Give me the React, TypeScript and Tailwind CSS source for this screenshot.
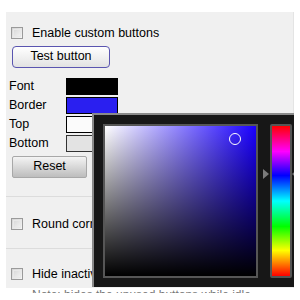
const rows = [
  { label: 'Font', swatch: 'bg-black border-black' },
  { label: 'Border', swatch: 'bg-[#2a1ff0] border-black' },
  { label: 'Top', swatch: 'bg-[#fbfbfb] border-black' },
  { label: 'Bottom', swatch: 'bg-[#e3e3e3] border-[#333]' },
];

function Checkbox() {
  return (
    <span className="inline-block h-[12px] w-[12px] shrink-0 border border-[#9a9a9a] bg-gradient-to-br from-[#d4d4d4] to-[#f6f6f6] p-[1px]">
      <span className="block h-full w-full border border-[#e8e8e8]" />
    </span>
  );
}

function ColorPicker() {
  return (
    <div className="absolute left-[92px] top-[113px] h-[174px] w-[202px] overflow-hidden">
      <div className="flex h-full w-[215px] items-start gap-[12px] border-l-[2px] border-t-[2px] border-[#8a8a8a] bg-[#171717] pl-[9px] pt-[9px]">
        <div className="relative h-[154px] w-[155px] border-[2px] border-[#565656] bg-[linear-gradient(to_right,#ffffff,#1a00ff)]">
          <div className="absolute inset-0 bg-gradient-to-b from-transparent to-black" />
          <div className="absolute left-[124px] top-[7px] h-[12px] w-[12px] rounded-full border-[1.5px] border-white" />
        </div>
        <div className="relative">
          <div className="h-[154px] w-[22px] rounded-[2px] border-[2px] border-[#555] bg-[linear-gradient(to_bottom,#ff0000,#ff00ff_17%,#0000ff_33%,#00ffff_50%,#00ff00_67%,#ffff00_83%,#ff0000)]" />
          <div className="absolute left-[-7px] top-[45px] h-0 w-0 border-y-[5px] border-l-[6px] border-y-transparent border-l-[#7a7a7a]" />
          <div className="absolute left-[22px] top-[45px] h-0 w-0 border-y-[5px] border-r-[6px] border-y-transparent border-r-[#7a7a7a]" />
        </div>
      </div>
    </div>
  );
}

export default function App() {
  return (
    <div className="relative h-[300px] w-[300px] overflow-hidden bg-white font-['Liberation_Sans',Arial,sans-serif] text-[12.5px] leading-none text-black">
      <div className="h-[293px] overflow-hidden pl-[6px] pt-[12px]">
        <div className="h-[276px] w-[288px] border-r border-[#e4e4e4] bg-[#f0f0f0]">
          <div className="flex items-center gap-[9px] pl-[5px] pt-[15px]">
            <Checkbox />
            <span>Enable custom buttons</span>
          </div>
          <button className="ml-[6px] mt-[6px] h-[22px] w-[98px] rounded-[4px] border border-[#5a55b0] bg-gradient-to-b from-white to-[#e2e2e2] text-[12.5px]">
            Test button
          </button>
          <div className="mt-[10px] flex flex-col gap-[2px]">
            {rows.map((r) => (
              <div key={r.label} className="flex h-[17px] items-center">
                <span className="w-[60px] pl-[3px]">{r.label}</span>
                <span className={`h-[17px] w-[52px] border ${r.swatch}`} />
              </div>
            ))}
          </div>
          <button className="ml-[6px] mt-[4px] h-[22px] w-[75px] rounded-[2px] border border-[#a8a8a8] bg-gradient-to-b from-[#f4f4f4] to-[#bdbdbd] text-[12.5px]">
            Reset
          </button>
          <div className="mt-[18px] border-t border-[#dcdcdc]" />
          <div className="flex items-center gap-[9px] pl-[5px] pt-[21px]">
            <Checkbox />
            <span>Round corners</span>
          </div>
          <div className="mt-[18px] border-t border-[#dcdcdc]" />
          <div className="flex items-center gap-[9px] pl-[5px] pt-[19px]">
            <Checkbox />
            <span>Hide inactive tabs</span>
          </div>
          <p className="pl-[26px] pt-[8px] text-[12px] text-[#777]">Note: hides the unused buttons while idle</p>
        </div>
      </div>
      <ColorPicker />
    </div>
  );
}
